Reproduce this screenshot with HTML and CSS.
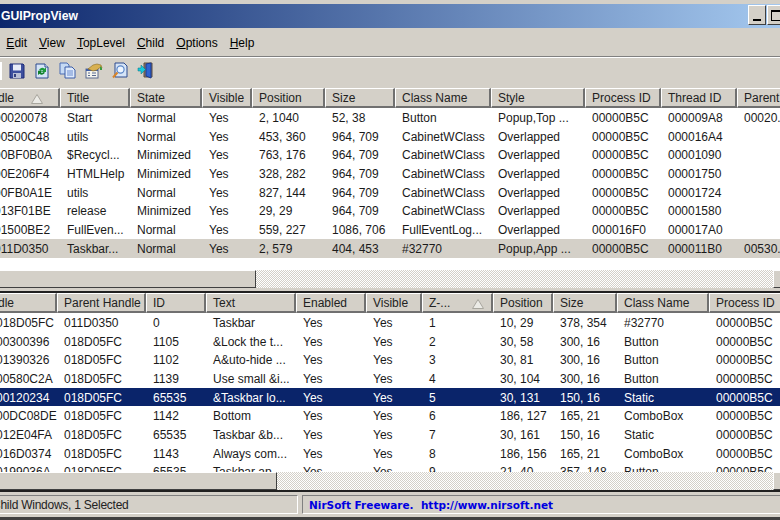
FILE: index.html
```html
<!DOCTYPE html>
<html lang="en">
<head>
    <meta charset="UTF-8">
    <title>GUIPropView</title>
    <link rel="stylesheet" href="styles.css">
</head>
<body>
    <div class="window">
        <div class="titlebar">
            <span class="title">GUIPropView</span>
            <div class="caption-buttons">
                <button class="caption-btn"><span class="min-glyph"></span></button>
                <button class="caption-btn"><span class="max-glyph"></span></button>
            </div>
        </div>

        <div class="menubar">
            <span class="menu-item menu-file"><u>F</u>ile</span>
            <span class="menu-item"><u>E</u>dit</span>
            <span class="menu-item"><u>V</u>iew</span>
            <span class="menu-item"><u>T</u>opLevel</span>
            <span class="menu-item"><u>C</u>hild</span>
            <span class="menu-item"><u>O</u>ptions</span>
            <span class="menu-item"><u>H</u>elp</span>
        </div>

        <div class="toolbar">
            <span class="tool-edge"></span>
            <!-- save -->
            <svg class="tool" width="16" height="16" viewBox="0 0 16 16">
                <path d="M1 1h13l1 1v13H1z" fill="#3d4f9e" stroke="#1c2a78"/>
                <rect x="4" y="1.5" width="8" height="6" fill="#e8ecf8"/>
                <rect x="4" y="10" width="8" height="5" fill="#b9bfd6"/>
                <rect x="5" y="11" width="2" height="3" fill="#34407f"/>
            </svg>
            <!-- refresh -->
            <svg class="tool" width="16" height="16" viewBox="0 0 16 16">
                <path d="M2 1h9l3 3v11H2z" fill="#d6e4f6" stroke="#2c4a8e"/>
                <path d="M11 1v3h3" fill="#fff" stroke="#2c4a8e"/>
                <path d="M5 7a3.4 3.4 0 0 1 5.5-1.2L12 4.500V9H7.600l1.500-1.600A1.600 1.600 0 0 0 6.700 8z" fill="#1c9a3a"/>
                <path d="M11 9.500a3.400 3.400 0 0 1-5.500 1.200L4 12V7.800h4.400L6.900 9.300a1.600 1.600 0 0 0 2.400-.4z" fill="#12802c"/>
            </svg>
            <!-- copy -->
            <svg class="tool" width="17" height="17" viewBox="0 0 17 17">
                <path d="M1 1h7l2 2v9H1z" fill="#c6daf4" stroke="#4a6cb4"/>
                <path d="M6 5h7l3 3v8H6z" fill="#dfeafa" stroke="#3a5ca8"/>
                <path d="M8 9h6M8 11h6M8 13h6" stroke="#6a8cd0"/>
            </svg>
            <!-- properties -->
            <svg class="tool" width="18" height="16" viewBox="0 0 18 16">
                <rect x="1" y="6" width="12" height="9" fill="#f4f4ee" stroke="#5a6a90"/>
                <rect x="1" y="6" width="12" height="2" fill="#3e5ea8"/>
                <path d="M3 10h2M7 10h4M3 12.500h2M7 12.500h4" stroke="#5a6a90"/>
                <path d="M3 6l5-4 4-1 4 1 1 3-3 0-2 2-4 1z" fill="#d8b050" stroke="#8a6a20" stroke-width=".6"/>
                <path d="M15 3l2 2v2h-2z" fill="#3a9a40"/>
            </svg>
            <!-- find -->
            <svg class="tool" width="16" height="17" viewBox="0 0 16 17">
                <path d="M3 1h9l3 3v11H3z" fill="#d6e4f6" stroke="#2c4a8e"/>
                <circle cx="8.500" cy="7.500" r="3.600" fill="#eef6ff" stroke="#5a86c8" stroke-width="1.200"/>
                <path d="M5.500 10.500L1 15.500" stroke="#d88428" stroke-width="2"/>
            </svg>
            <!-- exit -->
            <svg class="tool" width="17" height="17" viewBox="0 0 17 17">
                <path d="M7 1h8v14H7z" fill="#8a7a6a" stroke="#5a4c40"/>
                <path d="M9 2l5-1v15l-5-2z" fill="#2f62d0" stroke="#1c3a90"/>
                <path d="M1 6h3V3l4.500 4.500L4 12V9H1z" fill="#18c8d8" stroke="#0a7080" stroke-width=".5"/>
            </svg>
        </div>

        <div class="top-pane">
            <div class="list-view">
                <table class="list top-list">
                    <colgroup>
                        <col class="t1"><col class="t2"><col class="t3"><col class="t4"><col class="t5"><col class="t6">
                        <col class="t7"><col class="t8"><col class="t9"><col class="t10"><col class="t11">
                    </colgroup>
                    <thead>
                        <tr>
                            <th>Handle<svg class="sort-arrow" width="12" height="10" viewBox="0 0 12 10"><path d="M6 .5L11.500 9.500H.5z" fill="#ecebe6" stroke="#a8a69e"/></svg></th>
                            <th>Title</th><th>State</th><th>Visible</th><th>Position</th><th>Size</th>
                            <th>Class Name</th><th>Style</th><th>Process ID</th><th>Thread ID</th><th>Parent Handle</th>
                        </tr>
                    </thead>
                    <tbody>
                        <tr><td>00020078</td><td>Start</td><td>Normal</td><td>Yes</td><td>2, 1040</td><td>52, 38</td><td>Button</td><td>Popup,Top ...</td><td>00000B5C</td><td>000009A8</td><td>00020...</td></tr>
                        <tr><td>00500C48</td><td>utils</td><td>Normal</td><td>Yes</td><td>453, 360</td><td>964, 709</td><td>CabinetWClass</td><td>Overlapped</td><td>00000B5C</td><td>000016A4</td><td></td></tr>
                        <tr><td>00BF0B0A</td><td>$Recycl...</td><td>Minimized</td><td>Yes</td><td>763, 176</td><td>964, 709</td><td>CabinetWClass</td><td>Overlapped</td><td>00000B5C</td><td>00001090</td><td></td></tr>
                        <tr><td>00E206F4</td><td>HTMLHelp</td><td>Minimized</td><td>Yes</td><td>328, 282</td><td>964, 709</td><td>CabinetWClass</td><td>Overlapped</td><td>00000B5C</td><td>00001750</td><td></td></tr>
                        <tr><td>00FB0A1E</td><td>utils</td><td>Normal</td><td>Yes</td><td>827, 144</td><td>964, 709</td><td>CabinetWClass</td><td>Overlapped</td><td>00000B5C</td><td>00001724</td><td></td></tr>
                        <tr><td>013F01BE</td><td>release</td><td>Minimized</td><td>Yes</td><td>29, 29</td><td>964, 709</td><td>CabinetWClass</td><td>Overlapped</td><td>00000B5C</td><td>00001580</td><td></td></tr>
                        <tr><td>01500BE2</td><td>FullEven...</td><td>Normal</td><td>Yes</td><td>559, 227</td><td>1086, 706</td><td>FullEventLog...</td><td>Overlapped</td><td>000016F0</td><td>000017A0</td><td></td></tr>
                        <tr class="inactive"><td>011D0350</td><td>Taskbar...</td><td>Normal</td><td>Yes</td><td>2, 579</td><td>404, 453</td><td>#32770</td><td>Popup,App ...</td><td>00000B5C</td><td>000011B0</td><td>00530...</td></tr>
                    </tbody>
                </table>
            </div>
            <div class="hscroll">
                <div class="thumb thumb-top"></div>
                <div class="track"></div>
                <div class="thumb thumb-end"></div>
            </div>
        </div>

        <div class="splitter"></div>

        <div class="bottom-pane">
            <div class="list-view">
                <table class="list child-list">
                    <colgroup>
                        <col class="c1"><col class="c2"><col class="c3"><col class="c4"><col class="c5"><col class="c6">
                        <col class="c7"><col class="c8"><col class="c9"><col class="c10"><col class="c11">
                    </colgroup>
                    <thead>
                        <tr>
                            <th>Handle</th><th>Parent Handle</th><th>ID</th><th>Text</th><th>Enabled</th><th>Visible</th>
                            <th>Z-...<svg class="sort-arrow" width="12" height="10" viewBox="0 0 12 10"><path d="M6 .5L11.500 9.500H.5z" fill="#ecebe6" stroke="#a8a69e"/></svg></th>
                            <th>Position</th><th>Size</th><th>Class Name</th><th>Process ID</th>
                        </tr>
                    </thead>
                    <tbody>
                        <tr><td>018D05FC</td><td>011D0350</td><td>0</td><td>Taskbar</td><td>Yes</td><td>Yes</td><td>1</td><td>10, 29</td><td>378, 354</td><td>#32770</td><td>00000B5C</td></tr>
                        <tr><td>00300396</td><td>018D05FC</td><td>1105</td><td>&amp;Lock the t...</td><td>Yes</td><td>Yes</td><td>2</td><td>30, 58</td><td>300, 16</td><td>Button</td><td>00000B5C</td></tr>
                        <tr><td>01390326</td><td>018D05FC</td><td>1102</td><td>A&amp;uto-hide ...</td><td>Yes</td><td>Yes</td><td>3</td><td>30, 81</td><td>300, 16</td><td>Button</td><td>00000B5C</td></tr>
                        <tr><td>00580C2A</td><td>018D05FC</td><td>1139</td><td>Use small &amp;i...</td><td>Yes</td><td>Yes</td><td>4</td><td>30, 104</td><td>300, 16</td><td>Button</td><td>00000B5C</td></tr>
                        <tr class="selected"><td>00120234</td><td>018D05FC</td><td>65535</td><td>&amp;Taskbar lo...</td><td>Yes</td><td>Yes</td><td>5</td><td>30, 131</td><td>150, 16</td><td>Static</td><td>00000B5C</td></tr>
                        <tr><td>00DC08DE</td><td>018D05FC</td><td>1142</td><td>Bottom</td><td>Yes</td><td>Yes</td><td>6</td><td>186, 127</td><td>165, 21</td><td>ComboBox</td><td>00000B5C</td></tr>
                        <tr><td>012E04FA</td><td>018D05FC</td><td>65535</td><td>Taskbar &amp;b...</td><td>Yes</td><td>Yes</td><td>7</td><td>30, 161</td><td>150, 16</td><td>Static</td><td>00000B5C</td></tr>
                        <tr><td>016D0374</td><td>018D05FC</td><td>1143</td><td>Always com...</td><td>Yes</td><td>Yes</td><td>8</td><td>186, 156</td><td>165, 21</td><td>ComboBox</td><td>00000B5C</td></tr>
                        <tr><td>0199036A</td><td>018D05FC</td><td>65535</td><td>Taskbar ap...</td><td>Yes</td><td>Yes</td><td>9</td><td>21, 40</td><td>357, 148</td><td>Button</td><td>00000B5C</td></tr>
                    </tbody>
                </table>
            </div>
            <div class="hscroll">
                <div class="thumb thumb-bottom"></div>
                <div class="track"></div>
                <div class="thumb thumb-end"></div>
            </div>
        </div>

        <div class="statusbar">
            <div class="status-panel status-count">Child Windows, 1 Selected</div>
            <div class="status-panel status-link">NirSoft Freeware.&nbsp; http://www.nirsoft.net</div>
        </div>
    </div>
</body>
</html>
```

FILE: styles.css
```css
* {
    margin: 0;
    padding: 0;
    box-sizing: border-box;
}

html, body {
    width: 780px;
    height: 520px;
    overflow: hidden;
    background: #404040;
}

/* the window sits partly off the left edge of the shot */
.window {
    width: 900px;
    height: 520px;
    margin-left: -13px;
    background: #d4d0c8;
    font-family: "Liberation Sans", Arial, sans-serif;
    font-size: 12px;
    color: #000;
    display: flex;
    flex-direction: column;
    border-top: 4px solid #d4d0c8;
}

.titlebar {
    width: 803px;
    height: 24px;
    flex: none;
    display: flex;
    align-items: center;
    justify-content: space-between;
    padding: 0 4px 0 14px;
    background: linear-gradient(90deg, #0a246a 0%, #a6caf0 100%);
}

.title {
    color: #fff;
    font-weight: bold;
    font-size: 12.200px;
}

.caption-buttons {
    display: flex;
    gap: 1px;
    margin-bottom: 2px;
}

.caption-btn {
    width: 18px;
    height: 20px;
    background: #d4d0c8;
    border: 1px solid;
    border-color: #fff #404040 #404040 #fff;
    display: flex;
    align-items: flex-end;
    justify-content: center;
}

.caption-btn + .caption-btn {
    width: 19px;
}

.min-glyph {
    width: 8px;
    height: 2px;
    background: #000;
    margin-bottom: 3px;
}

.max-glyph {
    width: 12px;
    height: 11px;
    border: 1px solid #000;
    border-top-width: 2px;
    margin-bottom: 3px;
}

.menubar {
    height: 28px;
    flex: none;
    display: flex;
    align-items: center;
    gap: 12px;
    padding-left: 18px;
    border-bottom: 1px solid #808080;
    box-shadow: 0 1px 0 #fff;
    margin-top: 1px;
    position: relative;
}

.menu-file {
    margin-left: -30px;
}

.menu-item u {
    text-underline-offset: 1px;
}

.toolbar {
    height: 31px;
    flex: none;
    display: flex;
    align-items: center;
    gap: 9px;
    padding: 0 0 4px 19px;
}

.tool-edge {
    width: 2px;
    height: 18px;
    margin-left: -6px;
    margin-right: -2px;
    background: #fff;
}

.top-pane,
.bottom-pane {
    display: flex;
    flex-direction: column;
    flex: none;
}

.top-pane {
    height: 200px;
}

.bottom-pane {
    height: 197px;
}

.list-view {
    flex: 1;
    background: #fff;
    overflow: hidden;
    min-height: 0;
}

.list {
    border-collapse: separate;
    border-spacing: 0;
    table-layout: fixed;
    width: 800px;
}

.list th {
    height: 20px;
    padding: 1px 0 0 6px;
    font-weight: normal;
    text-align: left;
    white-space: nowrap;
    overflow: hidden;
    background: #d4d0c8;
    border-top: 1px solid #fff;
    border-left: 1px solid #fff;
    border-right: 2px solid #707070;
    border-bottom: 2px solid #707070;
    color: #222;
}

.list th:first-child {
    text-indent: -18px;
}

.list td {
    height: 18.700px;
    padding: 1px 0 0 7px;
    white-space: nowrap;
    overflow: hidden;
    color: #1a1a1a;
}

.sort-arrow {
    margin-left: 17px;
    vertical-align: middle;
}

.child-list .sort-arrow {
    margin-left: 22px;
}

.list .inactive td {
    background: #d4d0c8;
}

.list .selected td {
    background: #0a246a;
    color: #fff;
}

.child-list td:first-child {
    padding-left: 9px;
}

/* column widths, top list */
.t1 { width: 73px; }
.t2 { width: 70px; }
.t3 { width: 72px; }
.t4 { width: 50px; }
.t5 { width: 73px; }
.t6 { width: 70px; }
.t7 { width: 96px; }
.t8 { width: 94px; }
.t9 { width: 76px; }
.t10 { width: 76px; }
.t11 { width: 50px; }

/* column widths, child list */
.c1 { width: 70px; }
.c2 { width: 89px; }
.c3 { width: 60px; }
.c4 { width: 90px; }
.c5 { width: 70px; }
.c6 { width: 56px; }
.c7 { width: 71px; }
.c8 { width: 60px; }
.c9 { width: 64px; }
.c10 { width: 92px; }
.c11 { width: 78px; }

.hscroll {
    height: 18px;
    flex: none;
    display: flex;
}

.thumb {
    background: #d4d0c8;
    border: 1px solid;
    border-color: #fff #404040 #404040 #fff;
    flex: none;
}

.thumb-top {
    width: 269px;
}

.thumb-bottom {
    width: 290px;
}

.thumb-end {
    width: 114px;
}

.track {
    flex: 1;
    background-color: #fff;
    background-image: conic-gradient(#d4d0c8 25%, #fff 0 50%, #d4d0c8 0 75%, #fff 0);
    background-size: 2px 2px;
}

.splitter {
    height: 5px;
    flex: none;
    background: #d4d0c8;
    border-bottom: 2px solid #202020;
}

.statusbar {
    height: 30px;
    flex: none;
    display: flex;
    gap: 4px;
    padding: 3px 0;
    border-top: 2px solid #202020;
    border-bottom: 3px solid #404040;
}

.status-panel {
    display: flex;
    align-items: center;
    padding-left: 6px;
    border: 1px solid;
    border-color: #808080 #fff #fff #808080;
    color: #222;
}

.status-count {
    width: 311px;
    padding-left: 4px;
    letter-spacing: -.25px;
}

.status-link {
    flex: 1;
    color: #0000e0;
    font-weight: bold;
    font-family: "DejaVu Sans", sans-serif;
    font-size: 10.500px;
}
```
